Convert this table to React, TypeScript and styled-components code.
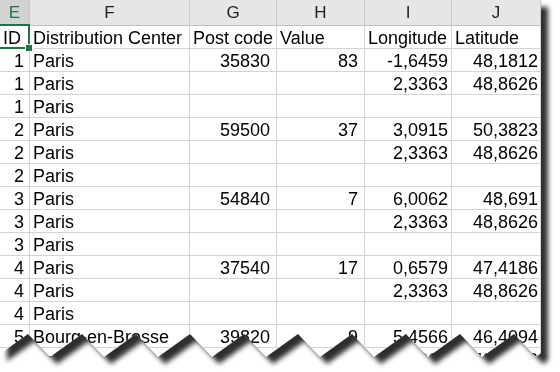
import React from "react"
import styled, { createGlobalStyle } from "styled-components"

const GlobalStyle = createGlobalStyle`
  html, body {
    margin: 0;
    padding: 0;
    background: #ffffff;
  }
  body {
    font-family: "Liberation Sans", Arial, sans-serif;
  }
`

type Column = { letter: string; width: number; padRight: number }

const columns: Column[] = [
  { letter: "E", width: 30, padRight: 5 },
  { letter: "F", width: 160, padRight: 3 },
  { letter: "G", width: 87, padRight: 6 },
  { letter: "H", width: 88, padRight: 6 },
  { letter: "I", width: 87, padRight: 3 },
  { letter: "J", width: 89, padRight: 2 },
]

const titles = ["ID", "Distribution Center", "Post code", "Value", "Longitude", "Latitude"]

const rows: string[][] = [
  ["1", "Paris", "35830", "83", "-1,6459", "48,1812"],
  ["1", "Paris", "", "", "2,3363", "48,8626"],
  ["1", "Paris", "", "", "", ""],
  ["2", "Paris", "59500", "37", "3,0915", "50,3823"],
  ["2", "Paris", "", "", "2,3363", "48,8626"],
  ["2", "Paris", "", "", "", ""],
  ["3", "Paris", "54840", "7", "6,0062", "48,691"],
  ["3", "Paris", "", "", "2,3363", "48,8626"],
  ["3", "Paris", "", "", "", ""],
  ["4", "Paris", "37540", "17", "0,6579", "47,4186"],
  ["4", "Paris", "", "", "2,3363", "48,8626"],
  ["4", "Paris", "", "", "", ""],
  ["5", "Bourg-en-Bresse", "39820", "9", "5,4566", "46,4094"],
  ["5", "Paris", "", "", "2,3363", "48,8626"],
]

// torn bottom edge of the sheet: teeth every 54px
const SHEET_W = 541
const FIRST_PEAK = 28
const PERIOD = 54
const DROP = 22
const PEAK_Y = 334
const VALLEY_Y = 357

const tornEdge = (() => {
  const pts = ["0px 0px", `${SHEET_W}px 0px`, `${SHEET_W}px 353px`]
  for (let k = 9; k >= 0; k--) {
    const peak = FIRST_PEAK + PERIOD * k
    pts.push(`${peak + DROP}px ${VALLEY_Y}px`, `${peak}px ${PEAK_Y}px`)
  }
  pts.push("0px 354px")
  return `polygon(${pts.join(", ")})`
})()

const isNumeric = (v: string) => /^-?[\d,]+$/.test(v)

function App() {
  return (
    <>
      <GlobalStyle />
      <Page>
        <Paper>
          <Sheet>
            {columns.map((c, i) => (
              <HeadCell key={c.letter} $selected={i === 0}>
                {c.letter}
              </HeadCell>
            ))}
            {titles.map((t, i) => (
              <Cell key={t} $right={false} $pad={columns[i].padRight}>
                {t}
              </Cell>
            ))}
            {rows.map((r, ri) =>
              r.map((v, ci) => (
                <Cell
                  key={`${ri}-${ci}`}
                  $right={isNumeric(v)}
                  $pad={columns[ci].padRight}
                >
                  {v}
                </Cell>
              ))
            )}
            <Selection>
              <FillHandle />
            </Selection>
          </Sheet>
        </Paper>
      </Page>
    </>
  )
}

export default App

const Page = styled.div`
  width: 560px;
  height: 372px;
  overflow: hidden;
  background: #ffffff;
`

const Paper = styled.div`
  width: ${SHEET_W}px;
  filter: drop-shadow(7px 7px 2.5px rgba(0, 0, 0, 0.82));
`

const Sheet = styled.div`
  position: relative;
  display: grid;
  grid-template-columns: ${columns.map((c) => `${c.width}px`).join(" ")};
  grid-template-rows: 26px;
  grid-auto-rows: 23px;
  background: #ffffff;
  clip-path: ${tornEdge};
`

const HeadCell = styled.div<{ $selected: boolean }>`
  box-sizing: border-box;
  display: flex;
  align-items: center;
  justify-content: center;
  padding-top: 1px;
  font-size: 17px;
  color: ${({ $selected }) => ($selected ? "#217346" : "#1e1e1e")};
  background: ${({ $selected }) => ($selected ? "#d2d2d2" : "#e6e6e6")};
  border-right: 1px solid #c9c9c9;
  border-bottom: ${({ $selected }) =>
    $selected ? "2px solid #217346" : "1px solid #bfbfbf"};
`

const Cell = styled.div<{ $right: boolean; $pad: number }>`
  box-sizing: border-box;
  padding: 0 ${({ $pad }) => $pad}px 0 3px;
  font-size: 18px;
  line-height: 25px;
  color: #000000;
  white-space: nowrap;
  text-align: ${({ $right }) => ($right ? "right" : "left")};
  border-right: 1px solid #d4d4d4;
  border-bottom: 1px solid #d4d4d4;
`

const Selection = styled.div`
  position: absolute;
  left: -2px;
  top: 24px;
  width: 32px;
  height: 25px;
  box-sizing: border-box;
  border: 2px solid #217346;
  pointer-events: none;
`

const FillHandle = styled.div`
  position: absolute;
  right: -4px;
  bottom: -4px;
  width: 6px;
  height: 6px;
  background: #217346;
  box-shadow: 0 0 0 1px #ffffff;
`
